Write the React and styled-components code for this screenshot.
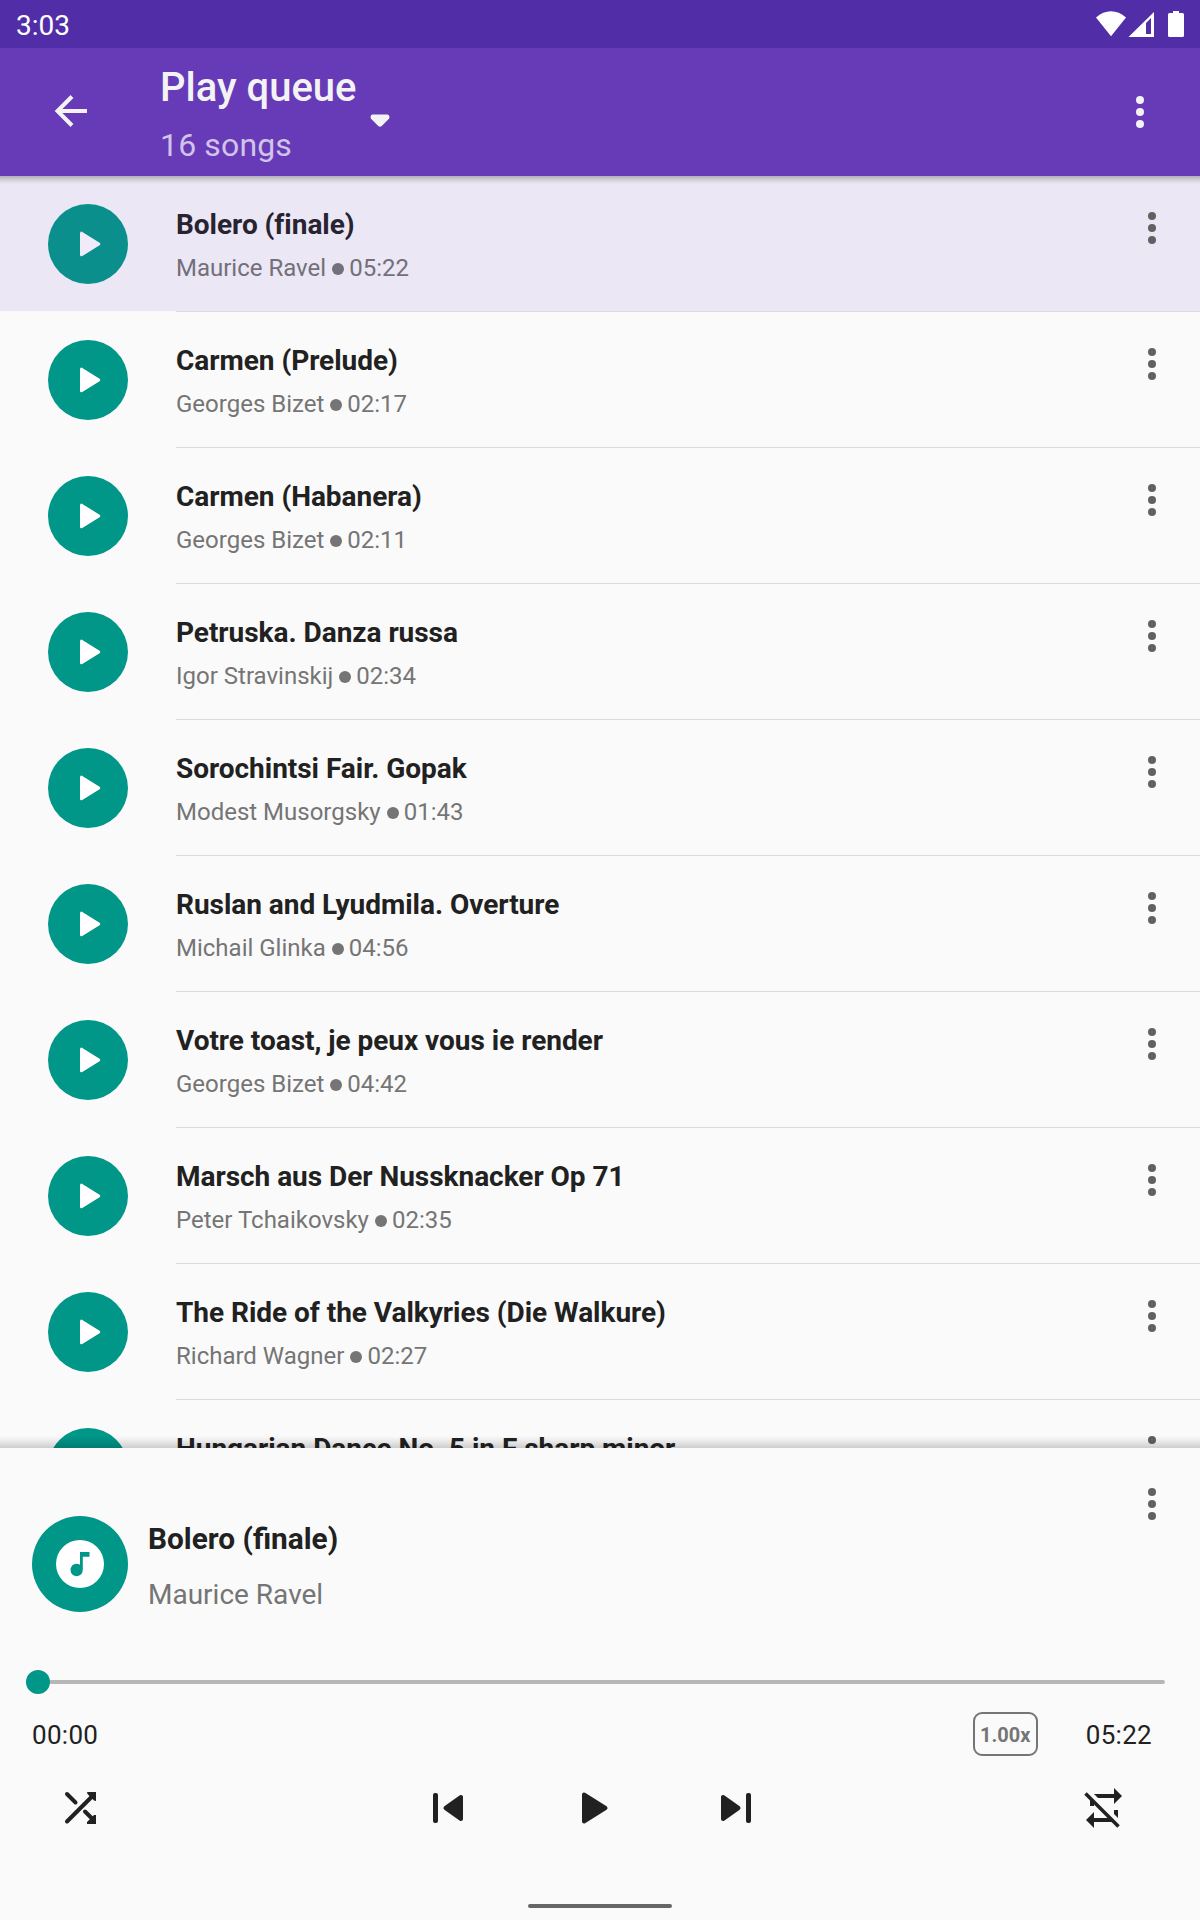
import React from "react";
import styled, { createGlobalStyle } from "styled-components";

const GlobalStyle = createGlobalStyle`
  * { box-sizing: border-box; }
  body { margin: 0; background: #fafafa; font-family: Roboto, "Noto Sans", sans-serif; }
  button { border: 0; padding: 0; background: none; color: inherit; font: inherit; display: flex; }
`;

const Screen = styled.div`
  width: 1200px;
  height: 1920px;
  display: flex;
  flex-direction: column;
  overflow: hidden;
  background: #fafafa;
`;

const StatusBar = styled.div`
  flex: none;
  height: 48px;
  display: flex;
  align-items: center;
  justify-content: space-between;
  padding: 0 16px;
  background: #512da8;
  color: #fff;
`;

const Clock = styled.span`
  padding-top: 4px;
  font-size: 28px;
  line-height: 32px;
`;

const StatusIcons = styled.div`
  display: flex;
  align-items: center;
`;

const Toolbar = styled.header`
  flex: none;
  height: 128px;
  display: flex;
  padding-right: 54px;
  align-items: center;
  background: #673ab7;
  color: #f3f3f3;
`;

const BackButton = styled.button`
  margin-left: 54px;
  width: 106px;
  padding-bottom: 2px;
`;

const Heading = styled.div`
  display: flex;
  align-items: center;
  gap: 14px;
  flex: 1;
`;

const HeadingText = styled.div`
  display: flex;
  flex-direction: column;
  gap: 14px;
  height: 100px;
  padding-top: 2px;
`;

const PageTitle = styled.h1`
  margin: 0;
  font-size: 40px;
  line-height: 48px;
  font-weight: 500;
`;

const PageSubtitle = styled.span`
  font-size: 32px;
  line-height: 38px;
  letter-spacing: 0.15px;
  color: #d1c4e9;
`;

const CaretSlot = styled.span`
  display: flex;
  padding-top: 17px;
  margin-left: -1px;
`;

const Queue = styled.ul`
  position: relative;
  flex: 1;
  min-height: 0;
  margin: 0;
  padding: 0;
  list-style: none;
  overflow: hidden;

  &::before, &::after {
    content: "";
    position: absolute;
    left: 0;
    right: 0;
    pointer-events: none;
  }
  &::before {
    top: 0;
    height: 8px;
    background: linear-gradient(rgba(0, 0, 0, 0.24), rgba(0, 0, 0, 0.1) 50%, rgba(0, 0, 0, 0));
  }
  &::after {
    bottom: 0;
    height: 12px;
    background: linear-gradient(rgba(0, 0, 0, 0), rgba(0, 0, 0, 0.08) 50%, rgba(0, 0, 0, 0.18));
  }
`;

const Row = styled.li`
  display: flex;
  height: 136px;
  padding-left: 48px;
  background: linear-gradient(${p => (p.$active ? "#ebe7f4, #ebe7f4" : "#fafafa, #fafafa")}) 0 0 / 100% 135px no-repeat;
  --title: ${p => (p.$active ? "#272330" : "#212121")};
  --detail: ${p => (p.$active ? "#736f7b" : "#757575")};
  --disc: ${p => (p.$active ? "#0b8f8c" : "#009688")};
  --glyph: ${p => (p.$active ? "#f0ebf8" : "#ffffff")};
`;

const PlayDisc = styled.button`
  && { display: block; }
  flex: none;
  width: 80px;
  height: 80px;
  margin: 28px 48px 0 0;
  border-radius: 50%;
  background: var(--disc);
  color: var(--glyph);
`;

const RowBody = styled.div`
  flex: 1;
  display: flex;
  justify-content: space-between;
  border-bottom: 1px solid #dadada;
`;

const RowText = styled.div`
  padding-top: 32px;
`;

const SongTitle = styled.div`
  font-size: 28px;
  line-height: 33px;
  font-weight: 700;
  letter-spacing: -0.03px;
  font-variant-ligatures: common-ligatures;
  color: var(--title);
  white-space: nowrap;
`;

const SongDetail = styled.div`
  margin-top: 13px;
  font-size: 24px;
  line-height: 28px;
  color: var(--detail);
  display: flex;
  align-items: center;
`;

const Dot = styled.i`
  width: 12px;
  height: 12px;
  margin: 2px 5px 0 6px;
  border-radius: 50%;
  background: currentColor;
`;

const MoreSlot = styled.button`
  color: #616161;
  width: 12px;
  height: 32px;
  margin: ${p => p.$margin};
`;

const Player = styled.section`
  flex: none;
  height: 472px;
  background: #fafafa;
  color: #212121;
  display: flex;
  flex-direction: column;
`;

const NowPlaying = styled.div`
  display: flex;
  height: 220px;
  padding-left: 32px;
`;

const Artwork = styled.div`
  width: 96px;
  height: 96px;
  margin: 68px 20px 0 0;
  border-radius: 50%;
  background: #009688;
`;

const NowText = styled.div`
  flex: 1;
  padding-top: 73px;
`;

const NowTitle = styled.div`
  font-size: 29.8px;
  line-height: 36px;
  font-weight: 700;
`;

const NowArtist = styled.div`
  margin-top: 21px;
  font-size: 28px;
  line-height: 33px;
  color: #757575;
`;

const Seek = styled.div`
  display: flex;
  align-items: center;
  height: 28px;
  padding: 0 35px 0 26px;
`;

const Thumb = styled.div`
  width: 24px;
  height: 24px;
  border-radius: 50%;
  background: #009688;
`;

const Track = styled.div`
  flex: 1;
  height: 4px;
  border-radius: 0 2px 2px 0;
  background: #b7b7b7;
`;

const Times = styled.div`
  display: flex;
  align-items: center;
  height: 44px;
  margin-top: 16px;
  padding: 0 48px 0 32px;
`;

const Time = styled.span`
  font-size: 26px;
  line-height: 32px;
  padding-top: 2px;
  letter-spacing: 0.3px;
`;

const Speed = styled.button`
  && {
    width: 65px;
    height: 44px;
    margin: 0 48px 0 auto;
    align-items: center;
    justify-content: center;
    padding-top: 2px;
    border: 2px solid #757575;
    border-radius: 9px;
    color: #757575;
    font-size: 20px;
    font-weight: 700;
  }
`;

const Controls = styled.div`
  display: flex;
  align-items: center;
  height: 48px;
  margin-top: 28px;
  padding: 0 72px 0 56px;
`;

const Control = styled.button`
  width: 48px;
  margin-left: ${p => p.$before || 0}px;
`;

const HomeBar = styled.div`
  width: 144px;
  height: 4px;
  margin: 72px auto 0;
  border-radius: 2px;
  background: #666;
`;

const More = () => (
  <svg width="12" height="32" viewBox="0 0 12 32" fill="currentColor">
    <circle cx="6" cy="4" r="4" /><circle cx="6" cy="16" r="4" /><circle cx="6" cy="28" r="4" />
  </svg>
);

const Triangle = () => (
  <svg width="80" height="80" viewBox="0 0 80 80">
    <path d="M33.5 29.2V50.8L50.8 40Z" fill="currentColor" stroke="currentColor" strokeWidth="3" strokeLinejoin="round" />
  </svg>
);

const Glyph = ({ children }) => (
  <svg width="48" height="48" viewBox="0 0 48 48" fill="currentColor">{children}</svg>
);

const songs = [
  ["Bolero (finale)", "Maurice Ravel", "05:22"],
  ["Carmen (Prelude)", "Georges Bizet", "02:17"],
  ["Carmen (Habanera)", "Georges Bizet", "02:11"],
  ["Petruska. Danza russa", "Igor Stravinskij", "02:34"],
  ["Sorochintsi Fair. Gopak", "Modest Musorgsky", "01:43"],
  ["Ruslan and Lyudmila. Overture", "Michail Glinka", "04:56"],
  ["Votre toast, je peux vous ie render", "Georges Bizet", "04:42"],
  ["Marsch aus Der Nussknacker Op 71", "Peter Tchaikovsky", "02:35"],
  ["The Ride of the Valkyries (Die Walkure)", "Richard Wagner", "02:27"],
  ["Hungarian Dance No. 5 in F sharp minor"],
];

export default function App() {
  return (
    <Screen>
      <GlobalStyle />
      <StatusBar>
        <Clock>3:03</Clock>
        <StatusIcons>
          <svg width="88" height="28" viewBox="1096 10 88 28" fill="#fff">
            <path d="M1096 17.500Q1103 11.200 1111 11.200T1126 17.500L1111 36.200Z" />
            <path fillRule="evenodd" d="M1154 12V37H1128.500ZM1151 18L1146 23V34H1151Z" />
            <path d="M1173 11h6v2h3.500q1.500 0 1.500 1.500v21q0 1.500-1.500 1.500h-13q-1.500 0-1.500-1.500v-21q0-1.500 1.500-1.500h3.500z" />
          </svg>
        </StatusIcons>
      </StatusBar>

      <Toolbar>
        <BackButton>
          <svg width="34" height="32" viewBox="0 0 34 32" fill="none" stroke="currentColor" strokeWidth="4">
            <path d="M33 16H4M18 1.500L3.500 16L18 30.500" />
          </svg>
        </BackButton>
        <Heading>
          <HeadingText>
            <PageTitle>Play queue</PageTitle>
            <PageSubtitle>16 songs</PageSubtitle>
          </HeadingText>
          <CaretSlot>
            <svg width="20" height="14" viewBox="0 0 20 14" fill="currentColor">
              <path d="M2.500 .500H17.500Q19.500 .500 19.500 3Q19.500 4.300 18.500 5.200L12 11.700Q10 13.700 8 11.700L1.500 5.200Q.500 4.300 .500 3Q.500 .500 2.500 .500Z" />
            </svg>
          </CaretSlot>
        </Heading>
        <More />
      </Toolbar>

      <Queue>
        {songs.map(([title, artist, length], i) => (
          <Row key={title} $active={i === 0}>
            <PlayDisc><Triangle /></PlayDisc>
            <RowBody>
              <RowText>
                <SongTitle>{title}</SongTitle>
                {artist && <SongDetail>{artist}<Dot />{length}</SongDetail>}
              </RowText>
              <MoreSlot $margin="36px 42px 0 0"><More /></MoreSlot>
            </RowBody>
          </Row>
        ))}
      </Queue>

      <Player>
        <NowPlaying>
          <Artwork>
            <svg width="96" height="96" viewBox="0 0 96 96">
              <circle cx="48" cy="48" r="24" fill="#fff" />
              <path fill="#009688" d="M48 36h9.500v4.700h-6.700v13.300a6.200 6.200 0 1 1-2.800-5.200z" />
            </svg>
          </Artwork>
          <NowText>
            <NowTitle>Bolero (finale)</NowTitle>
            <NowArtist>Maurice Ravel</NowArtist>
          </NowText>
          <MoreSlot $margin="40px 42px 0 0"><More /></MoreSlot>
        </NowPlaying>
        <Seek><Thumb /><Track /></Seek>
        <Times>
          <Time>00:00</Time>
          <Speed>1.00x</Speed>
          <Time>05:22</Time>
        </Times>
        <Controls>
          <Control>
            <Glyph>
              <path d="M11 10L19.500 18.500M11 37.500L36 12.500M29 27.500L37 35.500" fill="none" stroke="currentColor" strokeWidth="4" strokeLinecap="round" />
              <path d="M31 8H40V17L38 16.500L31.500 10ZM40 31V40H31L31 38L38 31Z" />
            </Glyph>
          </Control>
          <Control $before={320}>
            <Glyph>
              <rect x="9" y="9" width="5" height="30" rx="2" />
              <path d="M37 13V35L21.500 24Z" stroke="currentColor" strokeWidth="4" strokeLinejoin="round" />
            </Glyph>
          </Control>
          <Control $before={98}>
            <Glyph>
              <path d="M14 10.500V37.500L35.500 24Z" stroke="currentColor" strokeWidth="4" strokeLinejoin="round" />
            </Glyph>
          </Control>
          <Control $before={94}>
            <Glyph>
              <path d="M11 13V35L26.500 24Z" stroke="currentColor" strokeWidth="4" strokeLinejoin="round" />
              <rect x="34" y="9" width="5" height="30" rx="2" />
            </Glyph>
          </Control>
          <Control $before={320}>
            <Glyph>
              <path d="M14 10H34V4L42 12L34 20V14H18ZM10 14L14 18V22H10ZM38 26V34L34 30V26ZM14 28V34H31L35 38H14V44L6 36Z" />
              <path d="M5.500 9.500L38.500 42.500" fill="none" stroke="currentColor" strokeWidth="3.500" />
            </Glyph>
          </Control>
        </Controls>
        <HomeBar />
      </Player>
    </Screen>
  );
}
